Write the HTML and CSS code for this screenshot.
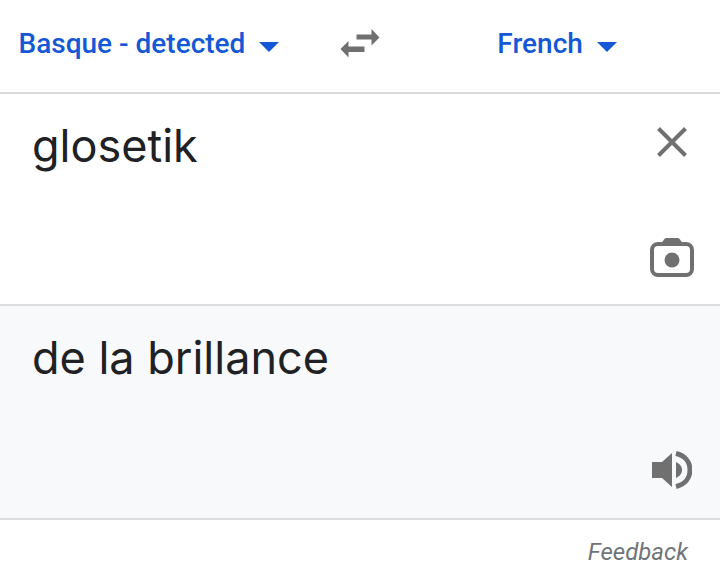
FILE: index.html
```html
<!DOCTYPE html>
<html lang="en">
<head>
<meta charset="utf-8">
<title>Translate</title>
<link rel="stylesheet" href="styles.css">
</head>
<body>
<div class="app">
  <header class="langs">
    <div class="lang lang-source"><span>Basque - detected</span><svg class="caret" viewBox="0 0 20 10"><path d="M0 0h20L10 10z"/></svg></div>
    <svg class="swap" viewBox="0 0 40 32"><path d="M16 6.500h15V1l8 8.500-8 8v-6H16zM24 18.500H8V13L0 21l8 8.500V24h16z" transform="translate(0.500 0)"/></svg>
    <div class="lang lang-target"><span>French</span><svg class="caret" viewBox="0 0 20 10"><path d="M0 0h20L10 10z"/></svg></div>
  </header>
  <section class="panel panel-input">
    <div class="phrase">glosetik</div>
    <svg class="icon close" viewBox="0 0 30 30"><path d="M1.500 1.500l27 27M28.500 1.500l-27 27"/></svg>
    <svg class="icon camera" viewBox="0 0 44 39"><path class="solid" d="M11 6l3-4.500C14.700.5 15.500 0 17 0h10c1.500 0 2.300.5 3 1.500L33 6z"/><rect x="2" y="6" width="40" height="31" rx="6"/><circle class="solid" cx="22" cy="22" r="7.500"/></svg>
  </section>
  <section class="panel panel-output">
    <div class="phrase">de la brillance</div>
    <svg class="icon speaker" viewBox="0 0 40 38"><path class="solid" d="M0 11h10L20 2v34L10 27H0z"/><path class="solid" d="M24 11c3.500 1.500 6 4.500 6 8s-2.500 6.500-6 8z"/><path d="M24 2.500C33 4.500 38 11 38 19s-5 14.500-14 16.500"/></svg>
  </section>
  <footer class="foot">Feedback</footer>
</div>
</body>
</html>
```
FILE: styles.css
```css
html, body {
  margin: 0;
  background: #fff;
}
.app {
  width: 720px;
  height: 578px;
  display: flex;
  flex-direction: column;
  font-family: Roboto, "Liberation Sans", sans-serif;
  overflow: hidden;
}
.langs {
  height: 88px;
  display: flex;
  align-items: center;
  border-bottom: 2px solid #dadce0;
  padding: 0 0 4px 18.5px;
}
.lang {
  display: flex;
  align-items: center;
  gap: 14px;
  font-size: 28px;
  font-weight: 500;
  color: #1558d6;
  margin-top: -2px;
}
.caret {
  width: 20px;
  height: 10px;
  fill: #1558d6;
  margin-top: 8px;
}
.swap {
  width: 40px;
  height: 32px;
  fill: #707070;
  margin-left: 60.5px;
}
.lang-target {
  margin-left: 117.5px;
}
.panel {
  position: relative;
  box-sizing: border-box;
  padding: 22px 32px 0;
  border-bottom: 2px solid #dadce0;
}
.panel-input {
  height: 212px;
}
.panel-output {
  height: 214px;
  background: #f8f9fb;
}
.phrase {
  font-family: Inter, Roboto, sans-serif;
  font-size: 45px;
  line-height: 60px;
  color: #202124;
}
.icon {
  position: absolute;
  fill: none;
  stroke: #707070;
}
.icon .solid {
  fill: #707070;
  stroke: none;
}
.close {
  left: 657px;
  top: 33px;
  width: 30px;
  height: 30px;
  stroke-width: 4;
}
.camera {
  left: 650px;
  top: 144px;
  width: 44px;
  height: 39px;
  stroke-width: 4;
}
.speaker {
  left: 652px;
  top: 145px;
  width: 40px;
  height: 38px;
  stroke-width: 5;
}
.foot {
  padding: 18px 32px 0 0;
  text-align: right;
  font-size: 24px;
  line-height: 28px;
  font-style: italic;
  color: #70757a;
}
```
